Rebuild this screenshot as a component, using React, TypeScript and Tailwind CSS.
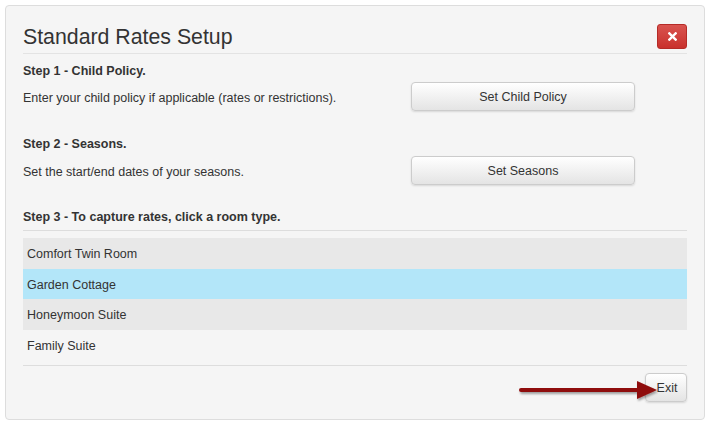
import React from "react";

const rooms = [
  { name: "Comfort Twin Room", bg: "bg-[#e8e8e8]", h: "h-[31px]" },
  { name: "Garden Cottage", bg: "bg-[#b3e6f9]", h: "h-[30px]" },
  { name: "Honeymoon Suite", bg: "bg-[#e8e8e8]", h: "h-[31px]" },
  { name: "Family Suite", bg: "", h: "h-[31px]" },
];

function GrayButton({ label, className = "" }: { label: string; className?: string }) {
  return (
    <button
      className={`bg-gradient-to-b from-white to-[#e4e4e4] border border-[#cccccc] rounded-[4px] shadow-[0_1px_2px_rgba(0,0,0,0.12)] text-[12.5px] text-[#333] pt-[1px] cursor-pointer ${className}`}
    >
      {label}
    </button>
  );
}

export default function App() {
  return (
    <div className="w-[710px] h-[426px] bg-white pt-[5px] pl-[5px] font-['Liberation_Sans',Arial,sans-serif] text-[#333]">
      <div className="relative w-[700px] h-[415px] bg-[#f5f5f5] border border-[#dddddd] rounded-[4px] px-[17px] pt-[18px]">
        <div className="flex items-center justify-between h-[25px] mb-[4px]">
          <h1 className="text-[21.3px] leading-[25px] text-[#333] pt-[1px]">Standard Rates Setup</h1>
          <button className="w-[30px] h-[25px] rounded-[3px] bg-gradient-to-b from-[#d9534f] to-[#c9302c] border border-[#b52b27] flex items-center justify-center">
            <svg width="9" height="9" viewBox="0 0 10 10">
              <path d="M1.5 1.5 L8.5 8.5 M8.5 1.5 L1.5 8.5" stroke="white" strokeWidth="2.6" strokeLinecap="square" />
            </svg>
          </button>
        </div>
        <div className="border-t border-[#e3e3e3]" />

        <div className="mt-[8px] text-[12.5px] leading-[18px] font-bold">Step 1 - Child Policy.</div>
        <div className="mt-[2px] flex items-center justify-between">
          <span className="text-[12.5px] pt-[4px]">Enter your child policy if applicable (rates or restrictions).</span>
          <GrayButton label="Set Child Policy" className="w-[224px] h-[29px] mr-[52px]" />
        </div>

        <div className="mt-[24px] text-[12.5px] leading-[18px] font-bold">Step 2 - Seasons.</div>
        <div className="mt-[3px] flex items-center justify-between">
          <span className="text-[12.5px] pt-[4px]">Set the start/end dates of your seasons.</span>
          <GrayButton label="Set Seasons" className="w-[224px] h-[29px] mr-[52px]" />
        </div>

        <div className="mt-[23px] text-[12.5px] leading-[18px] font-bold pb-[4px] border-b border-[#dddddd]">
          Step 3 - To capture rates, click a room type.
        </div>

        <div className="mt-[7px] flex flex-col">
          {rooms.map((r) => (
            <div key={r.name} className={`${r.h} ${r.bg} flex items-center pl-[4px] pt-[2px] text-[12.5px]`}>
              {r.name}
            </div>
          ))}
        </div>

        <div className="mt-[4px] border-t border-[#dddddd] flex justify-end pt-[7px]">
          <GrayButton label="Exit" className="w-[42px] h-[29px] pl-[2px]" />
        </div>

        <svg className="absolute left-[512px] top-[372px]" width="140" height="26" viewBox="0 0 140 26">
          <defs>
            <filter id="sh" x="-10%" y="-50%" width="120%" height="200%">
              <feDropShadow dx="1" dy="2" stdDeviation="1.2" floodColor="#000" floodOpacity="0.35" />
            </filter>
          </defs>
          <g filter="url(#sh)">
            <line x1="3" y1="12" x2="124" y2="12" stroke="#8f0a0a" strokeWidth="4" strokeLinecap="round" />
            <path d="M119 3 L139 12 L119 21 Z" fill="#8f0a0a" />
          </g>
        </svg>
      </div>
    </div>
  );
}
